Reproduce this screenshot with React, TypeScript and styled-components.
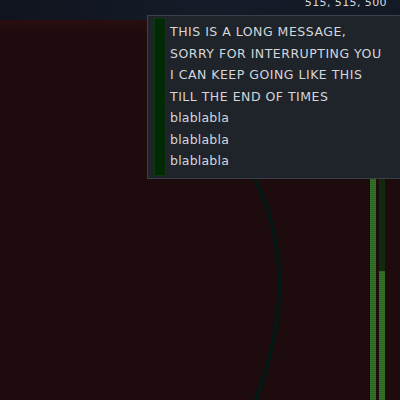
import React from "react";
import styled, { createGlobalStyle } from "styled-components";

const Global = createGlobalStyle`
  html, body { margin: 0; padding: 0; background: #1d0b0d; overflow: hidden; }
  #root { width: 400px; height: 400px; }
`;

const Screen = styled.div`
  position: relative;
  width: 400px;
  height: 400px;
  display: flex;
  flex-direction: column;
  overflow: hidden;
  font-family: "DejaVu Sans", sans-serif;
`;

const TopBar = styled.div`
  height: 20px;
  flex: none;
  background: linear-gradient(90deg, #0f141e 0%, #151b28 50%, #131925 100%);
  display: flex;
  justify-content: flex-end;
  align-items: flex-end;
  padding-right: 13px;
  overflow: hidden;
`;

const Coords = styled.span`
  color: #d6d8dc;
  font-size: 11px;
  line-height: 11px;
  margin-bottom: 12px;
  letter-spacing: 0.4px;
`;

const Panel = styled.div`
  position: relative;
  flex: 1;
  background: linear-gradient(180deg, #2a0e11 0px, #1f0b0e 14px, #1d0b0d 100%);
  display: flex;
  justify-content: flex-end;
  padding-right: 15px;
`;

const Arc = styled.svg`
  position: absolute;
  left: 0;
  top: 0;
`;

const Meters = styled.div`
  display: flex;
  gap: 3px;
  padding-top: 157px;
`;

const stripes = (c1: string, c2: string) =>
  `repeating-linear-gradient(180deg, ${c1} 0px, ${c1} 1px, ${c2} 1px, ${c2} 2px)`;

const Meter = styled.div`
  width: 6px;
  display: flex;
  flex-direction: column;
  background: ${stripes("#11260c", "#152c0f")};
`;

const MeterFill = styled.div<{ $level: number }>`
  margin-top: auto;
  height: ${(p) => p.$level}%;
  background: ${stripes("#2c6520", "#357428")};
`;

const Tooltip = styled.div`
  position: absolute;
  left: 147px;
  top: 15px;
  width: 258px;
  background: #1f242b;
  border: 1px solid #3c4149;
  padding: 2px 6px;
  display: flex;
  gap: 4px;
`;

const SideBar = styled.div`
  width: 10px;
  flex: none;
  background: #022a04;
  border: 1px solid #0a3a0c;
`;

const Lines = styled.div`
  flex: 1;
  padding: 3px 0 4px;
  color: #d4d6da;
  font-size: 12.5px;
  line-height: 21.5px;
`;

const Line = styled.div<{ $caps?: boolean }>`
  white-space: nowrap;
  letter-spacing: ${(p) => (p.$caps ? "0.5px" : "0.2px")};
`;

export default function App() {
  return (
    <>
      <Global />
      <Screen>
        <TopBar>
          <Coords>515, 515, 500</Coords>
        </TopBar>
        <Panel>
          <Arc width="400" height="380" viewBox="0 0 400 380">
            <path d="M 250 150 Q 306 250 255 382" fill="none" stroke="#021a16" strokeWidth="3.5" />
          </Arc>
          <Meters>
            <Meter>
              <MeterFill $level={100} />
            </Meter>
            <Meter>
              <MeterFill $level={58} />
            </Meter>
          </Meters>
        </Panel>
        <Tooltip>
          <SideBar />
          <Lines>
            <Line $caps>THIS IS A LONG MESSAGE,</Line>
            <Line $caps>SORRY FOR INTERRUPTING YOU</Line>
            <Line $caps>I CAN KEEP GOING LIKE THIS</Line>
            <Line $caps>TILL THE END OF TIMES</Line>
            <Line>blablabla</Line>
            <Line>blablabla</Line>
            <Line>blablabla</Line>
          </Lines>
          <SideBar />
        </Tooltip>
      </Screen>
    </>
  );
}
